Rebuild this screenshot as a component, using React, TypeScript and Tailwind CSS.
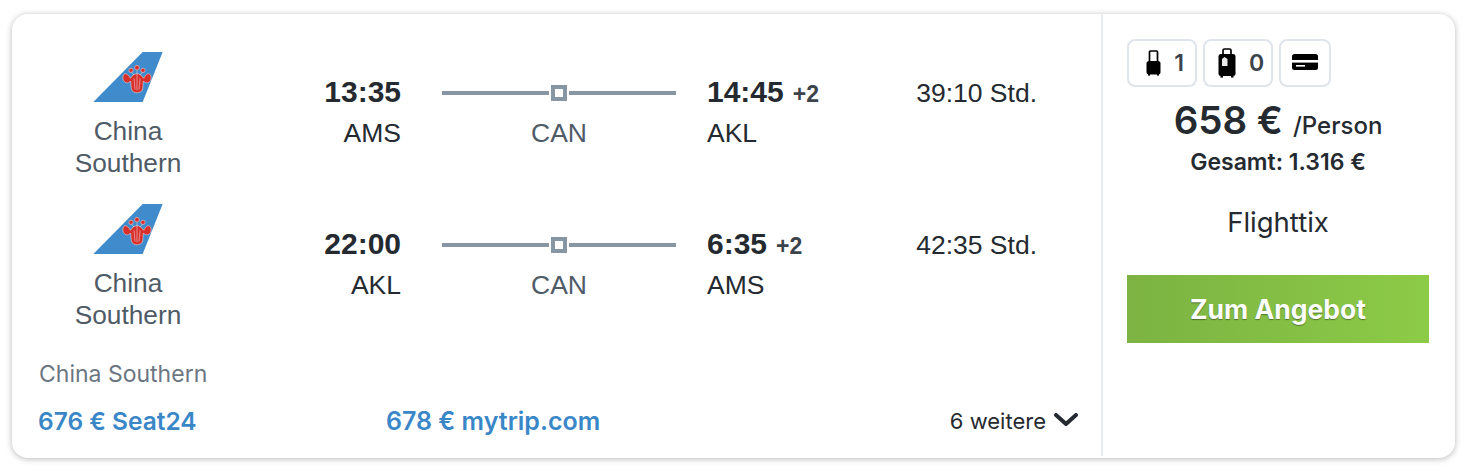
const sans = "font-['Liberation_Sans',Arial,sans-serif]";
const round = "font-['Inter',sans-serif]";

// Airline tail with the kapok flower
function TailLogo() {
  return (
    <svg width="70" height="50" viewBox="100 35 208 150" className="block">
      <path d="M100 185 L248 35 L308 35 L248 185 Z" fill="#3f8bcb" />
      <g fill="#d92f2b" stroke="#efdfe0" strokeWidth="1.6">
        <path d="M211 114 C200 92 186 100 189 116 C192 130 206 130 212 122 L214 146 C218 161 244 161 248 146 L250 122 C256 130 270 130 273 116 C276 100 262 92 251 114 C244 104 238 100 231 100 C224 100 218 104 211 114 Z" />
        <circle cx="231" cy="82" r="7" />
        <circle cx="213" cy="90" r="6.5" />
        <circle cx="249" cy="90" r="6.5" />
      </g>
      <path d="M231 90 V150 M222 114 L225 148 M240 114 L237 148 M215 96 L222 104 M247 96 L240 104" stroke="#efdfe0" strokeWidth="1.6" fill="none" />
    </svg>
  );
}

function CabinBag() {
  return (
    <svg width="15" height="26" viewBox="0 0 15 26" fill="#000" className="block">
      <path d="M3.5 12 V2 Q3.5 1 4.5 1 H10.5 Q11.5 1 11.5 2 V12" fill="none" stroke="#000" strokeWidth="1.7" />
      <rect x="0.5" y="11" width="14" height="13.5" rx="2.5" />
      <rect x="2" y="24" width="2" height="1.6" />
      <rect x="11" y="24" width="2" height="1.6" />
    </svg>
  );
}

function HoldBag() {
  return (
    <svg width="18" height="30" viewBox="0 0 18 30" className="block">
      <path d="M5 7 V2.5 Q5 1 6.5 1 H11.5 Q13 1 13 2.5 V7" fill="none" stroke="#000" strokeWidth="1.7" />
      <rect x="0.5" y="6" width="17" height="22" rx="2.5" fill="#000" />
      <rect x="2.5" y="28" width="2.5" height="1.6" fill="#000" />
      <rect x="13" y="28" width="2.5" height="1.6" fill="#000" />
      <path d="M4 11 L6.5 9 L9.5 11 V18 H4 Z" fill="#e8e8e8" />
    </svg>
  );
}

function CardIcon() {
  return (
    <svg width="26" height="16" viewBox="0 0 26 16" className="mb-[2px] block">
      <rect width="26" height="16" rx="2.5" fill="#000" />
      <rect y="6" width="26" height="2.6" fill="#fff" />
      <rect x="4" y="11" width="9" height="1.6" fill="#fff" />
    </svg>
  );
}

function Chevron() {
  return (
    <svg width="24" height="14" viewBox="0 0 24 14" className="mb-[2px] ml-[8px] block">
      <path d="M2 2 L12 11 L22 2" fill="none" stroke="#242a30" strokeWidth="4" strokeLinecap="round" strokeLinejoin="round" />
    </svg>
  );
}

function FlightRow(props: { dep: string; depAirport: string; arr: string; arrAirport: string; days: string; duration: string }) {
  return (
    <div className="flex h-[152px] items-start">
      <div className="flex w-[232px] flex-col items-center">
        <TailLogo />
        <div className={`${sans} mt-[13px] text-center text-[26.3px] leading-[32px] text-[#4f5b66]`}>
          China
          <br />
          Southern
        </div>
      </div>
      <div className={`${sans} w-[157px] pt-[22px] text-right`}>
        <div className="text-[30px] leading-[36px] font-bold text-[#242a30]">{props.dep}</div>
        <div className="mt-[5px] text-[26.5px] leading-[36px] text-[#242a30]">{props.depAirport}</div>
      </div>
      <div className={`${sans} ml-[41px] w-[234px] pt-[23px]`}>
        <div className="flex h-[36px] items-center">
          <div className="h-[4px] flex-1 bg-[#8796a3]" />
          <div className="mx-[2px] h-[16px] w-[16px] border-4 border-[#8796a3]" />
          <div className="h-[4px] flex-1 bg-[#8796a3]" />
        </div>
        <div className="mt-[4px] text-center text-[26.5px] leading-[36px] text-[#4f5b66]">CAN</div>
      </div>
      <div className={`${sans} ml-[31px] w-[180px] pt-[22px]`}>
        <div className="flex h-[36px] items-baseline gap-[9px]">
          <span className="text-[30px] leading-[36px] font-bold text-[#242a30]">{props.arr}</span>
          <span className="text-[23px] leading-[36px] font-bold text-[#3b434b]">{props.days}</span>
        </div>
        <div className="mt-[5px] text-[26.5px] leading-[36px] text-[#242a30]">{props.arrAirport}</div>
      </div>
      <div className={`${sans} w-[150px] pt-[23px] text-right text-[26.5px] leading-[36px] text-[#242a30]`}>{props.duration}</div>
    </div>
  );
}

function BagBadge(props: { children: React.ReactNode; width: string; inset?: string }) {
  return (
    <div className={`${props.width} ${props.inset ?? ""} flex h-[48px] items-center justify-center gap-[13px] rounded-[8px] border-2 border-[#dfe5ea] bg-white`}>
      {props.children}
    </div>
  );
}

export default function App() {
  return (
    <div className="h-[470px] w-[1472px] bg-white pt-[14px] pl-[12px]">
      <div className="flex h-[444px] w-[1443px] rounded-[16px] bg-white shadow-[0_1px_6px_rgba(0,0,0,0.28)]">
        <div className="w-[1089px] pt-[38px]">
          <FlightRow dep="13:35" depAirport="AMS" arr="14:45" arrAirport="AKL" days="+2" duration="39:10 Std." />
          <FlightRow dep="22:00" depAirport="AKL" arr="6:35" arrAirport="AMS" days="+2" duration="42:35 Std." />
          <div className={`${round} pl-[27px] pt-[4px] text-[23px] leading-[28px] text-[#6b7682]`}>China Southern</div>
          <div className={`${round} flex items-center pl-[26px] pt-[19px] pr-[23px]`}>
            <span className="w-[348px] text-[24.5px] leading-[28px] font-semibold text-[#3a87c8]">676 € Seat24</span>
            <span className="text-[25px] leading-[28px] font-semibold text-[#3a87c8]">678 € mytrip.com</span>
            <span className="ml-auto text-[22px] leading-[28px] text-[#242a30]">6 weitere</span>
            <Chevron />
          </div>
        </div>
        <div className={`${round} mb-[2px] w-[354px] border-l-2 border-[#e8ecef] pl-[24px] pr-[26px] pt-[25px]`}>
          <div className="flex gap-[6px]">
            <BagBadge width="w-[70px]" inset="pl-[6px]">
              <CabinBag />
              <span className="text-[23px] leading-none font-semibold text-[#3b434b]">1</span>
            </BagBadge>
            <BagBadge width="w-[70px]" inset="pl-[6px]">
              <HoldBag />
              <span className="text-[23px] leading-none font-semibold text-[#3b434b]">0</span>
            </BagBadge>
            <BagBadge width="w-[52px]">
              <CardIcon />
            </BagBadge>
          </div>
          <div className="mt-[10px] flex items-baseline justify-center gap-[10px] text-[#242a30]">
            <span className="text-[38.5px] leading-[46px] font-semibold">658 €</span>
            <span className="text-[24px] leading-[46px] font-medium">/Person</span>
          </div>
          <div className="mt-[-1px] text-center text-[23px] leading-[28px] font-semibold text-[#242a30]">Gesamt: 1.316 €</div>
          <div className="mt-[30px] text-center text-[27.5px] leading-[32px] text-[#242a30]">Flighttix</div>
          <button className="mt-[37px] flex h-[68px] w-[302px] items-center justify-center bg-gradient-to-r from-[#7cb342] to-[#8ccb47] pt-[2px] text-[26.5px] font-bold text-white [text-shadow:0_1px_1px_rgba(0,0,0,0.4)]">
            Zum Angebot
          </button>
        </div>
      </div>
    </div>
  );
}
